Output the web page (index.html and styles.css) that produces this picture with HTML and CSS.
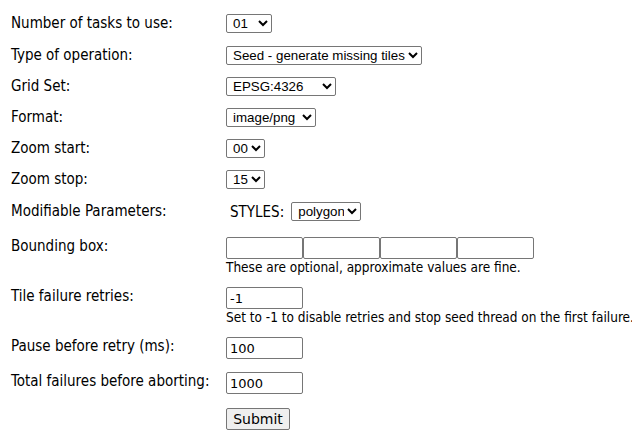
FILE: index.html
```html
<!DOCTYPE html>
<html>
<head>
<meta charset="utf-8">
<link rel="stylesheet" href="styles.css">
</head>
<body>
<form class="seed">
  <div class="row row-wide">
    <label class="lbl">Number of tasks to use:</label>
    <div class="val"><select class="sel w-tasks"><option>01</option></select></div>
  </div>
  <div class="row">
    <label class="lbl">Type of operation:</label>
    <div class="val"><select class="sel w-op"><option>Seed - generate missing tiles</option></select></div>
  </div>
  <div class="row">
    <label class="lbl">Grid Set:</label>
    <div class="val"><select class="sel w-grid"><option>EPSG:4326</option></select></div>
  </div>
  <div class="row">
    <label class="lbl">Format:</label>
    <div class="val"><select class="sel w-fmt"><option>image/png</option></select></div>
  </div>
  <div class="row">
    <label class="lbl">Zoom start:</label>
    <div class="val"><select class="sel w-zoom"><option>00</option></select></div>
  </div>
  <div class="row row-wide">
    <label class="lbl">Zoom stop:</label>
    <div class="val"><select class="sel w-zoom"><option>15</option></select></div>
  </div>
  <div class="row row-params">
    <label class="lbl">Modifiable Parameters:</label>
    <div class="val params"><span class="pname">STYLES:</span><select class="sel w-style"><option>polygon</option></select></div>
  </div>
  <div class="row">
    <label class="lbl">Bounding box:</label>
    <div class="val">
      <div class="bbox"><input class="txt" type="text"><input class="txt" type="text"><input class="txt" type="text"><input class="txt" type="text"></div>
      <div class="help">These are optional, approximate values are fine.</div>
    </div>
  </div>
  <div class="row">
    <label class="lbl">Tile failure retries:</label>
    <div class="val">
      <input class="txt" type="text" value="-1">
      <div class="help">Set to -1 to disable retries and stop seed thread on the first failure.</div>
    </div>
  </div>
  <div class="row row-input">
    <label class="lbl">Pause before retry (ms):</label>
    <div class="val"><input class="txt" type="text" value="100"></div>
  </div>
  <div class="row row-input row-last">
    <label class="lbl">Total failures before aborting:</label>
    <div class="val"><input class="txt" type="text" value="1000"></div>
  </div>
  <div class="row">
    <span class="lbl"></span>
    <div class="val"><button class="btn" type="button">Submit</button></div>
  </div>
</form>
</body>
</html>
```
FILE: styles.css
```css
html, body {
  background: #fff;
}
body {
  margin: 8px;
  font-family: "DejaVu Sans Condensed", "DejaVu Sans", Verdana, sans-serif;
  color: #000;
}
.seed {
  padding: 6px 0 0 3px;
}
.row {
  display: grid;
  grid-template-columns: 215px auto;
  align-items: start;
  padding-bottom: 12px;
}
.row-wide {
  padding-bottom: 13px;
}
.row-input {
  padding-bottom: 13px;
}
.row-last {
  padding-bottom: 14px;
}
.lbl {
  font-size: 15px;
  line-height: 18px;
  white-space: nowrap;
}
.val {
  display: flex;
  flex-direction: column;
  align-items: flex-start;
}
.sel {
  font-family: "Liberation Sans", Arial, sans-serif;
  font-size: 13.333px;
  height: 19px;
  border: 1px solid #767676;
  border-radius: 2px;
  background: #fff;
  color: #000;
  padding: 0 0 0 2px;
  margin: 0;
}
.w-tasks { width: 46px; }
.w-op { width: 196px; }
.w-grid { width: 110px; }
.w-fmt { width: 90px; }
.w-zoom { width: 39px; }
.w-style { width: 70px; }
.params {
  flex-direction: row;
  align-items: center;
  padding: 0 0 4px 4px;
}
.pname {
  font-size: 15px;
  line-height: 18px;
  margin-right: 7px;
}
.bbox {
  display: flex;
}
.txt {
  box-sizing: border-box;
  width: 77px;
  height: 22px;
  margin: 0;
  padding: 1px 3px 0;
  border: 1px solid #767676;
  border-radius: 2px;
  font-family: "DejaVu Sans", Verdana, sans-serif;
  font-size: 13px;
  color: #000;
  background: #fff;
}
.help {
  font-size: 13.5px;
  line-height: 15px;
  margin-top: 1px;
  white-space: nowrap;
}
.btn {
  box-sizing: border-box;
  width: 64px;
  height: 22px;
  margin: 0;
  padding: 0;
  border: 1px solid #767676;
  border-radius: 2px;
  background: #efefef;
  font-family: "DejaVu Sans", Verdana, sans-serif;
  font-size: 14px;
  color: #000;
}
```
